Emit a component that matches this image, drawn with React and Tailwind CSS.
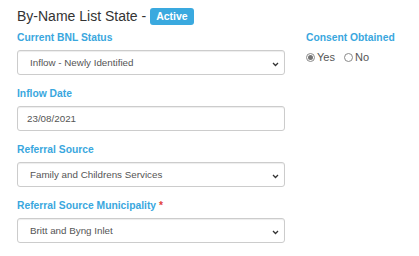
import React from 'react'

const font = { fontFamily: '"Liberation Sans", Arial, sans-serif' }

const Chevron = () => (
  <svg width="7" height="5" viewBox="0 0 7 5" className="absolute right-[5px] top-[11px]">
    <path d="M1 1 L3.5 3.5 L6 1" fill="none" stroke="#333" strokeWidth="1.3" />
  </svg>
)

const SelectBox = ({ value }) => (
  <div className="relative h-[25px] w-full rounded-[3px] border border-[#ccc] bg-white shadow-[inset_0_1px_1px_rgba(0,0,0,0.075)]">
    <div className="pl-[12px] text-[9.8px] leading-[23px] text-[#555]">{value}</div>
    <Chevron />
  </div>
)

const Label = ({ children, required }) => (
  <div className="mb-[5px] h-[14px] text-[10.3px] font-bold leading-[14px] text-[#3aa7de]">
    {children}
    {required && <span className="ml-[3px] text-[#e2403a]">*</span>}
  </div>
)

const Radio = ({ checked, label }) => (
  <div className="flex items-center">
    <span className="flex h-[9px] w-[9px] items-center justify-center rounded-full border border-[#8a8a8a] bg-white">
      {checked && <span className="h-[5px] w-[5px] rounded-full bg-[#757575]" />}
    </span>
    <span className="ml-[2px] text-[11px] leading-[14px] text-[#555]">{label}</span>
  </div>
)

export default function App() {
  return (
    <div className="h-[256px] w-[419px] bg-white pl-[17px] pt-[6px]" style={font}>
      <div className="flex h-[20px] items-center">
        <span className="text-[14px] leading-[20px] text-[#333]">By-Name List State -</span>
        <span className="ml-[4px] rounded-[3px] bg-[#3aa9df] px-[6px] text-[10.5px] font-bold leading-[17px] text-white">
          Active
        </span>
      </div>
      <div className="mt-[5px] flex">
        <div className="flex w-[268px] flex-col gap-[12px]">
          <div>
            <Label>Current BNL Status</Label>
            <SelectBox value="Inflow - Newly Identified" />
          </div>
          <div>
            <Label>Inflow Date</Label>
            <div className="h-[25px] w-full rounded-[3px] border border-[#ccc] bg-white pl-[9px] text-[9.8px] leading-[23px] text-[#555] shadow-[inset_0_1px_1px_rgba(0,0,0,0.075)]">
              23/08/2021
            </div>
          </div>
          <div>
            <Label>Referral Source</Label>
            <SelectBox value="Family and Childrens Services" />
          </div>
          <div>
            <Label required>Referral Source Municipality</Label>
            <SelectBox value="Britt and Byng Inlet" />
          </div>
        </div>
        <div className="ml-[21px]">
          <Label>Consent Obtained</Label>
          <div className="mt-[5px] flex gap-[9px]">
            <Radio checked label="Yes" />
            <Radio label="No" />
          </div>
        </div>
      </div>
    </div>
  )
}
